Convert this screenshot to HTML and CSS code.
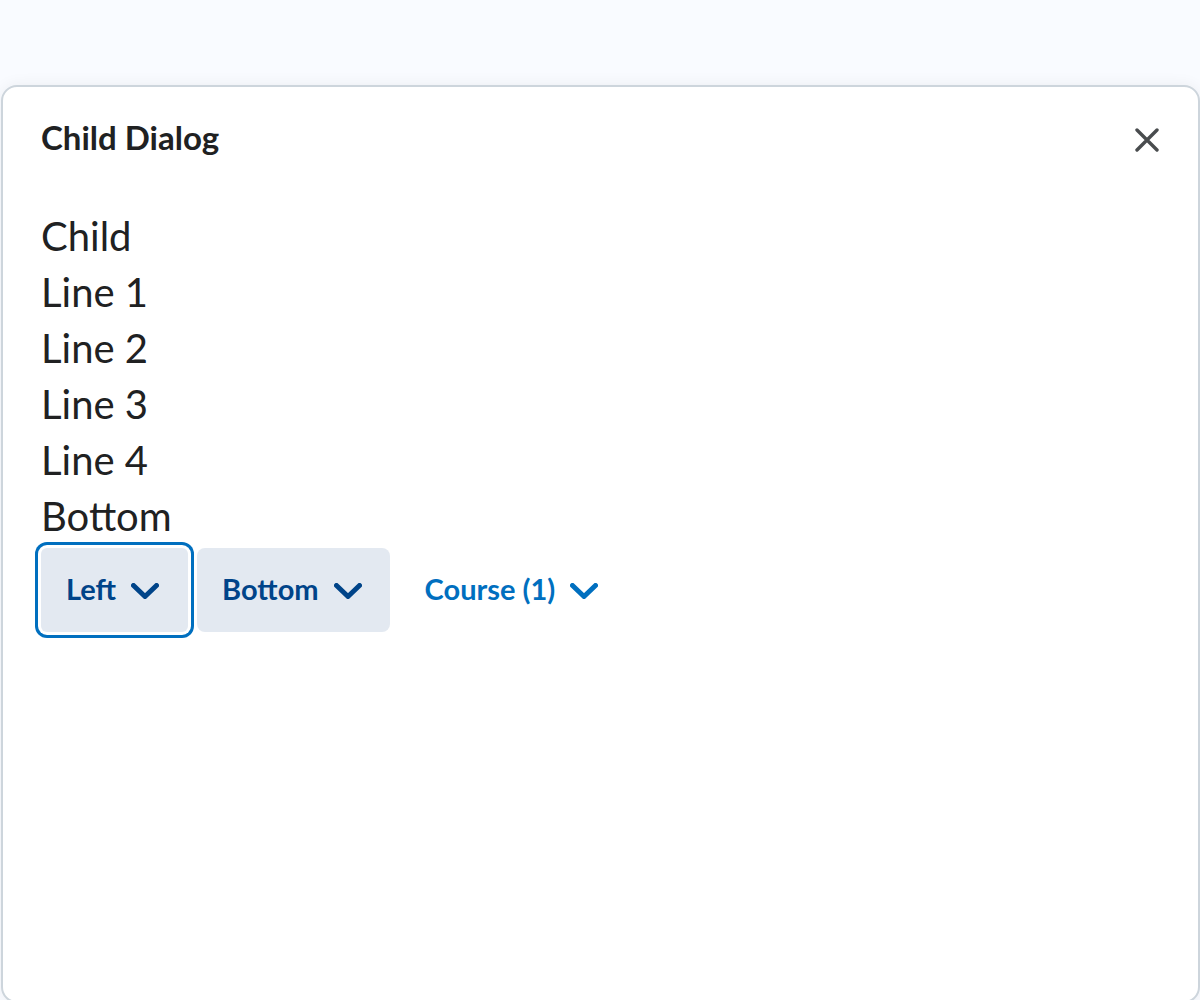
FILE: index.html
```html
<!DOCTYPE html>
<html lang="en">
<head>
<meta charset="utf-8">
<title>Child Dialog</title>
<link rel="stylesheet" href="styles.css">
</head>
<body>
<div class="dialog" role="dialog" aria-labelledby="dlg-title">
  <div class="header">
    <h2 class="title" id="dlg-title">Child Dialog</h2>
    <button class="close" aria-label="Close">
      <svg width="24" height="24" viewBox="0 0 24 24"><path d="M2 2 L22 22 M22 2 L2 22" stroke="#494c4e" stroke-width="3.4" stroke-linecap="round" fill="none"/></svg>
    </button>
  </div>
  <div class="content">
    <div class="line">Child</div>
    <div class="line">Line 1</div>
    <div class="line">Line 2</div>
    <div class="line">Line 3</div>
    <div class="line">Line 4</div>
    <div class="line">Bottom</div>
    <div class="buttons">
      <button class="btn focused"><span class="label">Left</span><svg class="chev" width="28" height="16" viewBox="0 0 28 16"><polyline points="2.5,2.5 14,13.5 25.5,2.5" /></svg></button>
      <button class="btn"><span class="label">Bottom</span><svg class="chev" width="28" height="16" viewBox="0 0 28 16"><polyline points="2.5,2.5 14,13.5 25.5,2.5" /></svg></button>
      <button class="btn subtle"><span class="label">Course (1)</span><svg class="chev" width="28" height="16" viewBox="0 0 28 16"><polyline points="2.5,2.5 14,13.5 25.5,2.5" /></svg></button>
    </div>
  </div>
</div>
</body>
</html>
```

FILE: styles.css
```css
html, body {
  margin: 0;
  padding: 0;
  height: 1000px;
  overflow: hidden;
  background: #f9fbff;
}

body {
  font-family: Lato, "Noto Sans", sans-serif;
  color: #202122;
  padding-top: 85px;
  padding-left: 1px;
  box-sizing: border-box;
}

.dialog {
  width: 1199px;
  height: 918px;
  box-sizing: border-box;
  background: #ffffff;
  border: 2px solid #cdd5dc;
  border-radius: 16px;
  box-shadow: 0 0 16px rgba(0, 0, 0, 0.06);
}

.header {
  display: flex;
  align-items: center;
  justify-content: space-between;
  padding: 26px 31px 0 38px;
}

.title {
  margin: 0;
  font-size: 33px;
  font-weight: 700;
  line-height: 48px;
}

.close {
  width: 40px;
  height: 40px;
  padding: 0;
  border: none;
  background: transparent;
  display: flex;
  align-items: center;
  justify-content: center;
  margin-top: 6px;
}

.content {
  padding: 47px 38px 0 38px;
}

.line {
  font-size: 40px;
  line-height: 56px;
}

.buttons {
  display: flex;
  align-items: center;
  gap: 9px;
  margin-top: 4px;
}

.btn {
  display: flex;
  align-items: center;
  gap: 15px;
  height: 84px;
  padding: 0 28px 0 25px;
  border: none;
  border-radius: 8px;
  background: #e3e9f1;
  color: #004489;
  font-family: Lato, "Noto Sans", sans-serif;
  font-size: 29px;
  font-weight: 700;
}

.label {
  display: block;
  margin-top: -4px;
}

.btn.focused {
  padding-right: 29px;
  box-shadow: 0 0 0 3px #ffffff, 0 0 0 6px #006fbf;
  border-radius: 6px;
}

.btn.subtle {
  background: transparent;
  color: #006fbf;
  padding-left: 26px;
}

.chev {
  display: block;
  margin-top: 2px;
}

.chev polyline {
  fill: none;
  stroke: currentColor;
  stroke-width: 5;
  stroke-linecap: round;
  stroke-linejoin: round;
}
```
